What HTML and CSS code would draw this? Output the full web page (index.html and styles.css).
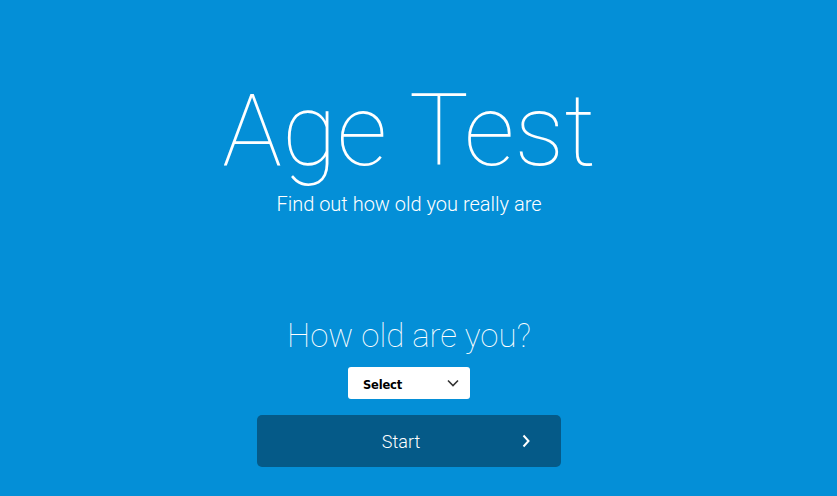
FILE: index.html
```html
<!DOCTYPE html>
<html lang="en">
<head>
<meta charset="utf-8">
<title>Age Test</title>
<link rel="stylesheet" href="styles.css">
</head>
<body>
<main class="page">
  <header class="hero">
    <h1 class="title">Age Test</h1>
    <p class="subtitle">Find out how old you really are</p>
  </header>
  <section class="quiz">
    <h2 class="question">How old are you?</h2>
    <div class="select">
      <span class="select-label">Select</span>
      <svg class="select-caret" width="12" height="8" viewBox="0 0 12 8"><path d="M1 1.5 L6 6.5 L11 1.5" fill="none" stroke="#333" stroke-width="1.6"/></svg>
    </div>
    <button class="start" type="button">
      <span class="start-label">Start</span>
      <svg class="start-caret" width="10" height="14" viewBox="0 0 10 14"><path d="M2.5 1.5 L7.5 7 L2.5 12.5" fill="none" stroke="#fff" stroke-width="2"/></svg>
    </button>
  </section>
</main>
</body>
</html>
```
FILE: styles.css
```css
html, body {
  margin: 0;
  padding: 0;
  height: 100%;
}
body {
  background: #048fd7;
  color: #fff;
  font-family: Roboto, "Liberation Sans", sans-serif;
  overflow: hidden;
}
.page {
  width: 818px;
  display: flex;
  flex-direction: column;
  align-items: center;
  padding-top: 81px;
}
.hero {
  display: flex;
  flex-direction: column;
  align-items: center;
}
.title {
  margin: 0;
  font-weight: 100;
  font-size: 100px;
  line-height: 1;
  letter-spacing: 0;
}
.subtitle {
  margin: 11px 0 0;
  font-weight: 300;
  font-size: 20px;
  line-height: 24px;
}
.quiz {
  margin-top: 101px;
  display: flex;
  flex-direction: column;
  align-items: center;
}
.question {
  margin: 0;
  font-weight: 100;
  font-size: 33px;
  line-height: 38px;
}
.select {
  margin-top: 12px;
  width: 122px;
  height: 32px;
  box-sizing: border-box;
  background: #fff;
  border-radius: 3px;
  display: flex;
  align-items: center;
  justify-content: space-between;
  padding: 0 11px 0 15px;
  color: #000;
}
.select-label {
  font-family: "DejaVu Sans", Verdana, sans-serif;
  font-weight: bold;
  font-size: 11.5px;
  letter-spacing: -0.2px;
  padding-top: 3px;
}
.start {
  margin-top: 16px;
  width: 304px;
  height: 52px;
  border: 0;
  border-radius: 5px;
  background: #055a88;
  color: #fff;
  font-family: Roboto, "Liberation Sans", sans-serif;
  font-weight: 300;
  font-size: 18px;
  display: flex;
  align-items: center;
  padding: 0 30px 0 0;
  cursor: pointer;
}
.start-label {
  flex: 1;
  text-align: center;
  padding-left: 24px;
}
.start-caret {
  display: block;
}
```
